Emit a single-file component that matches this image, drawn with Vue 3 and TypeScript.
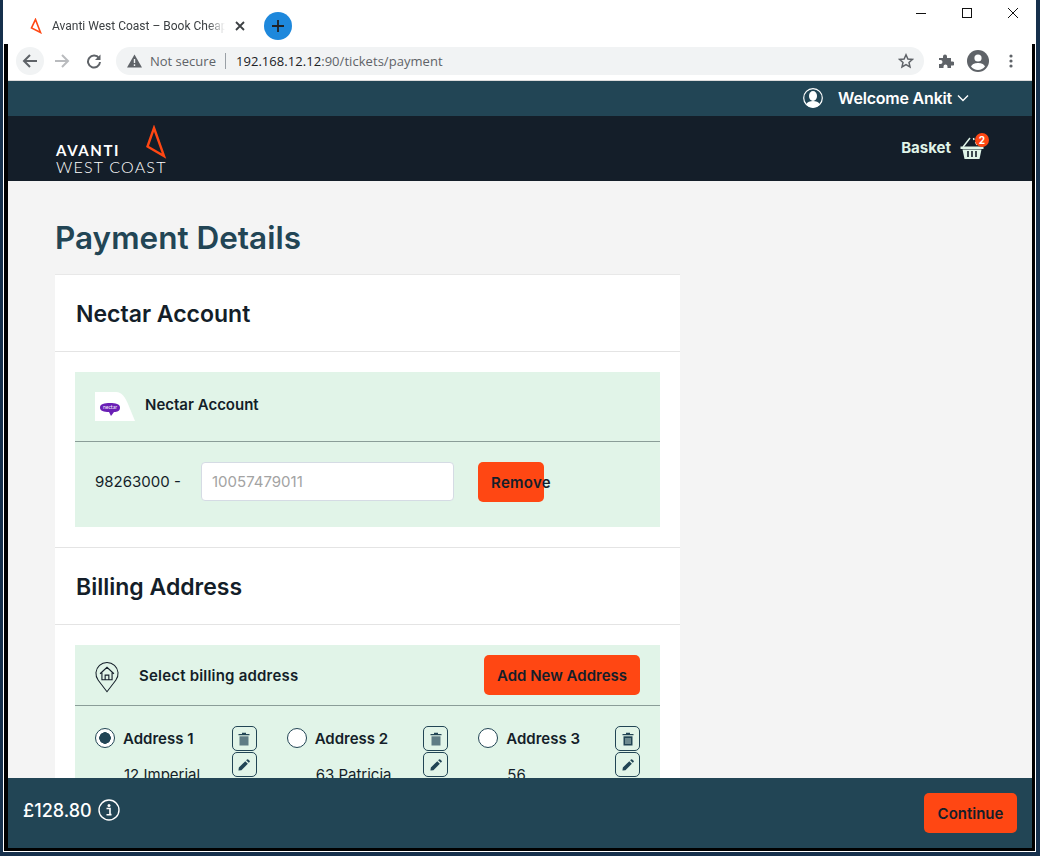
<script setup lang="ts">
interface Address {
  name: string;
  line: string;
  selected: boolean;
  faded: boolean;
}

const addresses: Address[] = [
  { name: "Address 1", line: "12 Imperial", selected: true, faded: true },
  { name: "Address 2", line: "63 Patricia", selected: false, faded: true },
  { name: "Address 3", line: "56", selected: false, faded: false },
];
</script>

<template>
  <div class="desktop">
    <div class="window">
      <div class="tabs">
        <svg class="favicon" width="12" height="16" viewBox="0 0 12 16">
          <path d="M5.5 1.5 10.5 14.5 1.5 10Z" fill="none" stroke="#ff4713" stroke-width="1.6" />
        </svg>
        <span class="tab-title">Avanti West Coast – Book Cheap</span>
        <svg class="tab-close" width="10" height="10" viewBox="0 0 10 10">
          <path d="M1 1 9 9M9 1 1 9" stroke="#3c4043" stroke-width="1.8" />
        </svg>
        <div class="new-tab">
          <svg width="14" height="14" viewBox="0 0 14 14">
            <path d="M7 1V13M1 7H13" stroke="#202124" stroke-width="1.8" />
          </svg>
        </div>
        <div class="win-controls">
          <svg width="12" height="12" viewBox="0 0 12 12"><path d="M1 6.5H11" stroke="#111" stroke-width="1" /></svg>
          <svg width="12" height="12" viewBox="0 0 12 12"><rect x="1.5" y="1.5" width="9" height="9" fill="none" stroke="#111" /></svg>
          <svg width="12" height="12" viewBox="0 0 12 12"><path d="M1 1 11 11M11 1 1 11" stroke="#111" stroke-width="1" /></svg>
        </div>
      </div>

      <div class="frame">
        <div class="toolbar">
          <div class="nav-btn nav-back">
            <svg width="16" height="16" viewBox="0 0 16 16">
              <path d="M15 8H2M8 2 2 8l6 6" fill="none" stroke="#5f6368" stroke-width="2" />
            </svg>
          </div>
          <div class="nav-btn">
            <svg width="16" height="16" viewBox="0 0 16 16">
              <path d="M1 8H14M8 2l6 6-6 6" fill="none" stroke="#b9bbbe" stroke-width="2" />
            </svg>
          </div>
          <div class="nav-btn">
            <svg width="16" height="16" viewBox="0 0 16 16">
              <path d="M13 5.2A6 6 0 1 0 14 9" fill="none" stroke="#5f6368" stroke-width="2" />
              <path d="M14.5 1.5V7H9Z" fill="#5f6368" />
            </svg>
          </div>
          <div class="omnibox">
            <svg width="15" height="14" viewBox="0 0 15 14">
              <path d="M7.5 0.5 15 13.5H0Z" fill="#5f6368" />
              <path d="M7.5 5V9M7.5 10.2V12" stroke="#f1f3f4" stroke-width="1.4" />
            </svg>
            <span class="not-secure">Not secure</span>
            <span class="omni-sep"></span>
            <span class="url"><b>192.168.12.12</b>:90/tickets/payment</span>
            <svg class="star" width="16" height="16" viewBox="0 0 16 16">
              <path d="M8 1.8 9.9 6l4.5.4-3.4 3 1 4.5L8 11.5l-4 2.4 1-4.5-3.4-3L6.100 6Z" fill="none" stroke="#5f6368" stroke-width="1.500" />
            </svg>
          </div>
          <div class="tool-icons">
            <svg width="16" height="16" viewBox="0 0 16 16">
              <path d="M1 5H5V3.500a2 2 0 0 1 4 0V5H13V8.500H14.500a2 2 0 0 1 0 4H13V15H9.500V13.500a2 2 0 0 0-4 0V15H1V11H2.500a2 2 0 0 0 0-4H1Z" fill="#5f6368" />
            </svg>
            <svg width="22" height="22" viewBox="0 0 22 22">
              <circle cx="11" cy="11" r="11" fill="#5f6368" />
              <circle cx="11" cy="8" r="3.600" fill="#fff" />
              <path d="M4 16.500C5.500 13.500 8.500 13 11 13s5.500.5 7 3.500A8.800 8.800 0 0 1 11 20a8.800 8.800 0 0 1-7-3.500Z" fill="#fff" />
            </svg>
            <svg class="dots" width="4" height="14" viewBox="0 0 4 14">
              <circle cx="2" cy="2" r="1.600" fill="#5f6368" />
              <circle cx="2" cy="7" r="1.600" fill="#5f6368" />
              <circle cx="2" cy="12" r="1.600" fill="#5f6368" />
            </svg>
          </div>
        </div>

        <div class="page">
          <div class="top-bar">
            <svg class="user-icon" width="20" height="20" viewBox="0 0 20 20">
              <circle cx="10" cy="10" r="9.300" fill="none" stroke="#fff" stroke-width="1.200" />
              <ellipse cx="10" cy="8" rx="4" ry="5" fill="#fff" />
              <path d="M3 16.500C4.500 13.500 7 13 10 13s5.500.5 7 3.500A9 9 0 0 1 10 19.500 9 9 0 0 1 3 16.500Z" fill="#fff" />
            </svg>
            <span class="welcome">Welcome Ankit</span>
            <svg width="12" height="8" viewBox="0 0 12 8">
              <path d="M1 1.500 6 6.500 11 1.500" fill="none" stroke="#fff" stroke-width="1.400" />
            </svg>
          </div>

          <header class="site-header">
            <div class="logo">
              <svg class="logo-mark" width="22" height="34" viewBox="0 0 22 34">
                <path d="M9 3 19 31 2.500 21.500Z" fill="none" stroke="#ff4713" stroke-width="2.400" />
              </svg>
              <div class="logo-top">AVANTI</div>
              <div class="logo-bottom">WEST COAST</div>
            </div>
            <div class="basket">
              <span>Basket</span>
              <div class="basket-icon">
                <svg width="24" height="24" viewBox="0 0 24 24">
                  <path d="M3 10 10 1M13.500 1 14 3M15.500 5 17 8" fill="none" stroke="#e0f4e8" stroke-width="1.500" />
                  <path d="M0.500 9.500H23.500V12H.5ZM2.500 12.500H21.500L19.500 22H4.500Z" fill="#e0f4e8" />
                  <path d="M8 14V20M12 14V20M16 14V20" stroke="#141e29" stroke-width="1.600" />
                </svg>
                <span class="badge">2</span>
              </div>
            </div>
          </header>

          <main class="content">
            <h1>Payment Details</h1>
            <section class="card">
              <h2 class="card-title">Nectar Account</h2>
              <div class="card-body">
                <div class="panel">
                  <div class="panel-head nectar-head">
                    <svg class="nectar-logo" width="40" height="29" viewBox="0 0 40 29">
                      <path d="M0 0H21C27 0 30 5 33 12L40 29H0Z" fill="#fff" />
                      <path d="M5 15.500C5 12 9.500 11 15 11S25 12 25 15.500 22.500 20 19 20L16 24 14 20C9 20 5 19 5 15.500Z" fill="#6a1fb5" />
                      <text x="15" y="17" text-anchor="middle" class="nectar-word">nectar</text>
                    </svg>
                    <span class="panel-title nectar-title">Nectar Account</span>
                  </div>
                  <div class="nectar-row">
                    <span class="prefix">98263000 -</span>
                    <input class="card-input" placeholder="10057479011" />
                    <button class="btn btn-remove">Remove</button>
                  </div>
                </div>
              </div>

              <h2 class="card-title">Billing Address</h2>
              <div class="card-body billing-body">
                <div class="panel">
                  <div class="panel-head billing-head">
                    <svg class="pin" width="24" height="32" viewBox="0 0 26 34">
                      <path d="M13 33 3.500 20.500A12 12 0 1 1 22.500 20.500Z" fill="none" stroke="#141e29" stroke-width="1.100" />
                      <path d="M5.500 13.500 13 6.500l7.500 7M7.500 12.500V20H18.500V12.500M11 20V15H15V20" fill="none" stroke="#141e29" stroke-width="1.200" />
                    </svg>
                    <span class="panel-title billing-title">Select billing address</span>
                    <button class="btn btn-add">Add New Address</button>
                  </div>
                  <div class="address-grid">
                    <div v-for="address in addresses" :key="address.name" class="address">
                      <div class="address-main">
                        <div class="address-name">
                          <span class="radio" :class="{ on: address.selected }"></span>
                          <span>{{ address.name }}</span>
                        </div>
                        <div class="address-line">{{ address.line }}</div>
                      </div>
                      <div class="address-actions">
                        <button class="icon-btn">
                          <svg width="12" height="14" viewBox="0 0 12 14">
                            <path d="M0.500 2H11.500V3.300H.5ZM4 2V.8H8V2Z" fill="#224555" />
                            <path d="M1.500 4.300H10.500V13.500H1.500Z" :fill="address.faded ? '#5f7c85' : '#224555'" />
                            <path v-if="!address.faded" d="M4 6V12M6 6V12M8 6V12" stroke="#e1f4e8" stroke-width=".8" />
                          </svg>
                        </button>
                        <button class="icon-btn">
                          <svg width="12" height="12" viewBox="0 0 14 14">
                            <path d="M0.500 13.500 1 10 8.500 2.500 11.500 5.500 4 13ZM9.500 1.500 10.500.5a1 1 0 0 1 1.400 0l1.600 1.600a1 1 0 0 1 0 1.400l-1 1Z" fill="#224555" />
                          </svg>
                        </button>
                      </div>
                    </div>
                  </div>
                </div>
              </div>
            </section>
          </main>

          <footer class="site-footer">
            <div class="total">
              <span>£128.80</span>
              <svg width="22" height="22" viewBox="0 0 22 22">
                <circle cx="11" cy="11" r="10" fill="none" stroke="#fff" stroke-width="1.400" />
                <circle cx="11" cy="6.500" r="1.500" fill="#fff" />
                <path d="M8.500 9.500H12V15.500H13.500M8.500 15.800H13.500" fill="none" stroke="#fff" stroke-width="1.600" />
              </svg>
            </div>
            <button class="btn btn-continue">Continue</button>
          </footer>
        </div>
      </div>
    </div>
  </div>
</template>

<style scoped>
.desktop {
  width: 1040px;
  height: 856px;
  box-sizing: border-box;
  padding: 0 4px 4px 3px;
  background: #16304c;
  overflow: hidden;
}

.window {
  height: 100%;
  box-sizing: border-box;
  display: flex;
  flex-direction: column;
  background: #fff;
  border: solid #fff;
  border-width: 0 1px 1px 1px;
}

.tabs {
  height: 44px;
  flex: none;
  display: flex;
  align-items: center;
  padding-left: 26px;
  font-family: Roboto, "Liberation Sans", sans-serif;
  font-size: 12px;
  color: #3c4043;
}

.favicon {
  margin-top: 8px;
}

.tab-title {
  width: 173px;
  margin-left: 10px;
  margin-top: 8px;
  white-space: nowrap;
  overflow: hidden;
  -webkit-mask-image: linear-gradient(to right, #000 90%, transparent);
  mask-image: linear-gradient(to right, #000 90%, transparent);
}

.tab-close {
  margin-left: 10px;
  margin-top: 8px;
}

.new-tab {
  width: 28px;
  height: 28px;
  margin-left: 19px;
  margin-top: 8px;
  border-radius: 50%;
  background: #1e88dc;
  display: flex;
  align-items: center;
  justify-content: center;
}

.win-controls {
  margin-left: auto;
  margin-right: 16px;
  margin-bottom: 18px;
  display: flex;
  gap: 34px;
}

.frame {
  flex: 1;
  min-height: 0;
  display: flex;
  flex-direction: column;
  border: solid #000;
  border-width: 0 3px 3px 4px;
}

.toolbar {
  height: 37px;
  flex: none;
  box-sizing: border-box;
  display: flex;
  align-items: flex-start;
  padding: 3px 0 0 8px;
  background: #fff;
  border-bottom: 1px solid #dcdcdc;
}

.nav-btn {
  width: 28px;
  height: 28px;
  margin-right: 4px;
  display: flex;
  align-items: center;
  justify-content: center;
  border-radius: 50%;
}

.nav-back {
  background: #f1f3f4;
}

.omnibox {
  width: 808px;
  height: 28px;
  margin-left: 4px;
  box-sizing: border-box;
  display: flex;
  align-items: center;
  padding: 0 10px 0 11px;
  border-radius: 14px;
  background: #f1f3f4;
  font-family: "Open Sans", "Liberation Sans", sans-serif;
  font-size: 13px;
  color: #5f6368;
  white-space: nowrap;
}

.not-secure {
  margin-left: 8px;
}

.omni-sep {
  width: 1px;
  height: 16px;
  margin: 0 10px 0 9px;
  background: #9aa0a6;
}

.url {
  letter-spacing: 0.05px;
}

.url b {
  font-weight: 400;
  color: #202124;
}

.star {
  margin-left: auto;
}

.tool-icons {
  margin-left: 14px;
  height: 28px;
  display: flex;
  align-items: center;
  gap: 13px;
}

.dots {
  margin-left: 7px;
}

.page {
  flex: 1;
  min-height: 0;
  display: flex;
  flex-direction: column;
  font-family: Inter, "Liberation Sans", sans-serif;
  color: #141e29;
}

.top-bar {
  height: 35px;
  flex: none;
  box-sizing: border-box;
  display: flex;
  align-items: center;
  justify-content: flex-end;
  padding: 0 63px 1px 0;
  background: #224555;
  color: #fff;
}

.welcome {
  margin: 0 5px 0 15px;
  font-size: 16px;
  font-weight: 600;
  letter-spacing: -0.2px;
}

.site-header {
  height: 65px;
  flex: none;
  display: flex;
  align-items: center;
  justify-content: space-between;
  padding: 0 48px;
  background: #141e29;
}

.logo {
  position: relative;
  width: 110px;
  padding-top: 20px;
  color: #fff;
  font-family: Lato, "Liberation Sans", sans-serif;
}

.logo-mark {
  position: absolute;
  top: 2px;
  right: -1px;
}

.logo-top {
  font-size: 15px;
  font-weight: 700;
  line-height: 15px;
  letter-spacing: 1.6px;
}

.logo-bottom {
  font-size: 16px;
  font-weight: 300;
  line-height: 17px;
  letter-spacing: 1.2px;
  white-space: nowrap;
}

.basket {
  display: flex;
  align-items: center;
  gap: 9px;
  color: #e0f4e8;
  font-size: 15px;
  font-weight: 700;
  margin-bottom: 2px;
}

.basket-icon {
  position: relative;
  height: 24px;
  margin-top: 3px;
}

.badge {
  position: absolute;
  top: -4px;
  right: -5px;
  width: 14px;
  height: 14px;
  border-radius: 50%;
  background: #ff4713;
  color: #fff;
  font-size: 10px;
  line-height: 14px;
  text-align: center;
}

.content {
  flex: 1;
  min-height: 0;
  overflow: hidden;
  padding: 0 352px 0 47px;
  background: #f4f4f4;
}

h1 {
  margin: 37px 0 17px;
  font-size: 31.5px;
  line-height: 39px;
  font-weight: 600;
  color: #224555;
}

.card {
  background: #fff;
  border: 1px solid #e8e8e8;
  border-width: 1px 0 0;
}

.card-title {
  margin: 0;
  height: 76px;
  box-sizing: content-box;
  padding-left: 21px;
  border-bottom: 1px solid #e4e4e4;
  font-size: 23px;
  font-weight: 600;
  line-height: 78px;
}

.card-body {
  padding: 20px 20px 20px;
  border-bottom: 1px solid #e4e4e4;
}

.billing-body {
  border-bottom: 0;
}

.panel {
  background: #e1f4e8;
}

.panel-head {
  display: flex;
  align-items: center;
  border-bottom: 1px solid #8a9d98;
}

.panel-title {
  font-size: 15px;
  font-weight: 600;
}

.nectar-head {
  height: 69px;
  padding: 0 20px;
  gap: 10px;
}

.nectar-title {
  margin-bottom: 5px;
}

.billing-title {
  letter-spacing: 0.2px;
}

.nectar-word {
  font-family: Lato, sans-serif;
  font-size: 5px;
  fill: #fff;
}

.nectar-row {
  height: 85px;
  box-sizing: border-box;
  display: flex;
  align-items: center;
  padding: 0 20px 5px;
  font-size: 15px;
}

.prefix {
  width: 106px;
  margin-top: -1px;
}

.card-input {
  width: 253px;
  height: 39px;
  margin-top: -1px;
  box-sizing: border-box;
  padding: 0 10px;
  border: 1px solid #d5dbe4;
  border-radius: 4px;
  background: #fff;
  font-family: Inter, sans-serif;
  font-size: 15px;
}

.card-input::placeholder {
  color: #a3a3a3;
}

.btn {
  padding: 0;
  border: 0;
  border-radius: 5px;
  background: #ff4713;
  color: #141e29;
  font-family: Inter, "Liberation Sans", sans-serif;
  font-size: 15px;
  font-weight: 600;
}

.btn-remove {
  width: 66px;
  height: 40px;
  margin-left: 24px;
  padding-left: 13px;
  text-align: left;
  white-space: nowrap;
  overflow: visible;
  letter-spacing: 0.3px;
}

.billing-head {
  height: 60px;
  padding: 0 20px;
  gap: 20px;
}

.pin {
  margin-top: 4px;
}

.btn-add {
  width: 156px;
  height: 40px;
  margin-left: auto;
}

.address-grid {
  display: grid;
  grid-template-columns: repeat(3, 1fr);
  column-gap: 30px;
  padding: 20px 20px 0;
}

.address {
  display: flex;
  justify-content: space-between;
}

.address-main {
  min-width: 0;
}

.address-name {
  display: flex;
  align-items: center;
  gap: 8px;
  height: 24px;
  font-size: 15px;
  font-weight: 600;
}

.radio {
  width: 18px;
  height: 18px;
  border: 1px solid #224555;
  border-radius: 50%;
  background: #fff;
}

.radio.on {
  background: radial-gradient(circle, #224555 0 5.500px, #fff 6px);
}

.address-line {
  margin: 15px 0 0 29px;
  font-size: 15px;
  white-space: nowrap;
}

.address-actions {
  display: flex;
  flex-direction: column;
  gap: 1px;
}

.icon-btn {
  width: 25px;
  height: 25px;
  padding: 0;
  display: flex;
  align-items: center;
  justify-content: center;
  border: 1px solid #224555;
  border-radius: 5px;
  background: transparent;
}

.site-footer {
  height: 70px;
  flex: none;
  box-sizing: border-box;
  display: flex;
  align-items: center;
  justify-content: space-between;
  padding: 0 15px;
  background: #224555;
}

.total {
  display: flex;
  align-items: center;
  gap: 6px;
  margin-bottom: 6px;
  color: #fff;
  font-size: 18px;
  font-weight: 500;
}

.btn-continue {
  width: 93px;
  height: 40px;
}
</style>

<style>
html,
body {
  margin: 0;
  background: #16304c;
}
</style>
